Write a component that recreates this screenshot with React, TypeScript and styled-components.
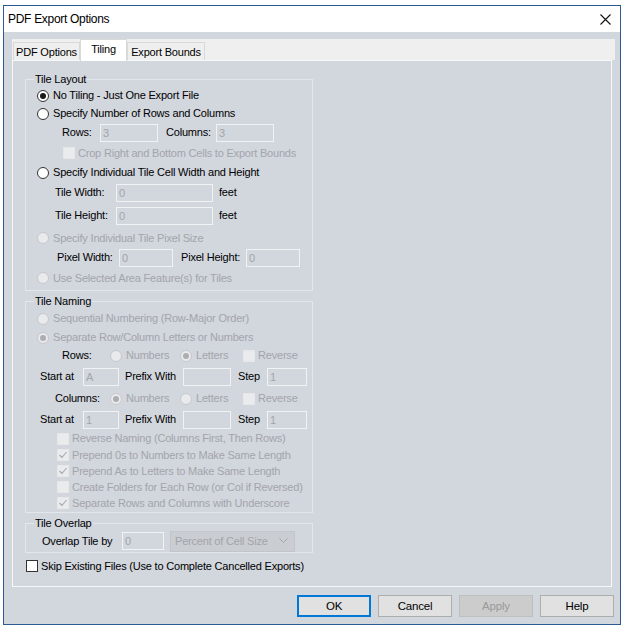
import React from "react";
import styled, { createGlobalStyle } from "styled-components";

const GlobalStyle = createGlobalStyle`
  html, body {
    margin: 0;
    padding: 0;
    background: #ffffff;
  }
  body {
    font-family: "Liberation Sans", Arial, sans-serif;
    font-size: 11px;
    letter-spacing: -0.2px;
    color: #000;
  }
`;

const Radio = ({ label, checked = false, disabled = false }: { label: string; checked?: boolean; disabled?: boolean }) => (
    <Item>
        <RadioCircle $checked={checked} $disabled={disabled} />
        <Text $disabled={disabled}>{label}</Text>
    </Item>
);

const Check = ({ label, checked = false, disabled = false }: { label: string; checked?: boolean; disabled?: boolean }) => (
    <Item $gap={3}>
        <CheckBox $disabled={disabled}>
            {checked && (
                <svg width="10" height="10" viewBox="0 0 10 10">
                    <polyline points="1.5,5 4,7.5 8.5,2" fill="none" stroke={disabled ? "#a3a6ab" : "#222"} strokeWidth="1.1" />
                </svg>
            )}
        </CheckBox>
        <Text $disabled={disabled}>{label}</Text>
    </Item>
);

const StartRow = ({ start, pl, h }: { start: string; pl: number; h: number }) => (
    <Row $h={h} $pl={pl}>
        <Label $w={43}>Start at</Label>
        <Field $w={36}>{start}</Field>
        <Label $w={58} $ml={6}>Prefix With</Label>
        <Field $w={48} />
        <Label $w={29} $ml={7}>Step</Label>
        <Field $w={40}>1</Field>
    </Row>
);

const App = () => {
    return (
        <Screen>
            <GlobalStyle />
            <Window>
                <TitleBar>
                    <Title>PDF Export Options</Title>
                    <svg width="11" height="11" viewBox="0 0 11 11">
                        <path d="M0.5 0.5 L10.5 10.5 M10.5 0.5 L0.5 10.5" stroke="#111" strokeWidth="1.1" />
                    </svg>
                </TitleBar>

                <Body>
                    <TabControl>
                        <TabStrip>
                            <Tab $w={67}>PDF Options</Tab>
                            <Tab $w={47} $active>Tiling</Tab>
                            <Tab $w={78}>Export Bounds</Tab>
                        </TabStrip>

                        <Page>
                            <Group>
                                <Legend>Tile Layout</Legend>
                                <Row $h={19} $pl={11}><Radio label="No Tiling - Just One Export File" checked /></Row>
                                <Row $h={17} $pl={11}><Radio label="Specify Number of Rows and Columns" /></Row>
                                <Row $h={21} $pl={36}>
                                    <Label $w={38}>Rows:</Label>
                                    <Field $w={58}>3</Field>
                                    <Label $w={50} $ml={8}>Columns:</Label>
                                    <Field $w={58}>3</Field>
                                </Row>
                                <Row $h={20} $pl={37}><Check label="Crop Right and Bottom Cells to Export Bounds" disabled /></Row>
                                <Row $h={19} $pl={11}><Radio label="Specify Individual Tile Cell Width and Height" /></Row>
                                <Row $h={21} $pl={29}>
                                    <Label $w={61}>Tile Width:</Label>
                                    <Field $w={97}>0</Field>
                                    <Label $ml={6}>feet</Label>
                                </Row>
                                <Row $h={25} $pl={29}>
                                    <Label $w={61}>Tile Height:</Label>
                                    <Field $w={97}>0</Field>
                                    <Label $ml={6}>feet</Label>
                                </Row>
                                <Row $h={20} $pl={11}><Radio label="Specify Individual Tile Pixel Size" disabled /></Row>
                                <Row $h={19} $pl={31}>
                                    <Label $w={62}>Pixel Width:</Label>
                                    <Field $w={54}>0</Field>
                                    <Label $w={65} $ml={8}>Pixel Height:</Label>
                                    <Field $w={54}>0</Field>
                                </Row>
                                <Row $h={22} $pl={11}><Radio label="Use Selected Area Feature(s) for Tiles" disabled /></Row>
                            </Group>

                            <Group $mt={4}>
                                <Legend>Tile Naming</Legend>
                                <Row $h={21} $pl={11}><Radio label="Sequential Numbering (Row-Major Order)" disabled /></Row>
                                <Row $h={17} $pl={11}><Radio label="Separate Row/Column Letters or Numbers" disabled checked /></Row>
                                <Row $h={19} $pl={36}>
                                    <Label $w={48}>Rows:</Label>
                                    <Slot $w={70}><Radio label="Numbers" disabled /></Slot>
                                    <Slot $w={63}><Radio label="Letters" disabled checked /></Slot>
                                    <Check label="Reverse" disabled />
                                </Row>
                                <StartRow start="A" pl={14} h={23} />
                                <Row $h={21} $pl={29}>
                                    <Label $w={55}>Columns:</Label>
                                    <Slot $w={70}><Radio label="Numbers" disabled checked /></Slot>
                                    <Slot $w={63}><Radio label="Letters" disabled /></Slot>
                                    <Check label="Reverse" disabled />
                                </Row>
                                <StartRow start="1" pl={14} h={21} />
                                <Row $h={17} $pl={31}><Check label="Reverse Naming (Columns First, Then Rows)" disabled /></Row>
                                <Row $h={16} $pl={31}><Check label="Prepend 0s to Numbers to Make Same Length" disabled checked /></Row>
                                <Row $h={16} $pl={31}><Check label="Prepend As to Letters to Make Same Length" disabled checked /></Row>
                                <Row $h={16} $pl={31}><Check label="Create Folders for Each Row (or Col if Reversed)" disabled /></Row>
                                <Row $h={16} $pl={31}><Check label="Separate Rows and Columns with Underscore" disabled checked /></Row>
                            </Group>

                            <Group $mt={4} $pb={0}>
                                <Legend>Tile Overlap</Legend>
                                <Row $h={22} $pl={16}>
                                    <Label $w={80}>Overlap Tile by</Label>
                                    <Field $w={42}>0</Field>
                                    <Select>
                                        <span>Percent of Cell Size</span>
                                        <svg width="9" height="6" viewBox="0 0 9 6">
                                            <polyline points="0.5,0.5 4.5,4.5 8.5,0.5" fill="none" stroke="#a3a6ab" strokeWidth="1" />
                                        </svg>
                                    </Select>
                                </Row>
                            </Group>

                            <Row $h={16} $pl={1} $mt={5}>
                                <Item $gap={3}>
                                    <CheckBox />
                                    <Text>Skip Existing Files (Use to Complete Cancelled Exports)</Text>
                                </Item>
                            </Row>
                        </Page>
                    </TabControl>

                    <Buttons>
                        <Button $default>OK</Button>
                        <Button>Cancel</Button>
                        <Button $disabled>Apply</Button>
                        <Button>Help</Button>
                    </Buttons>
                </Body>
            </Window>
        </Screen>
    );
};

/* CSS */
const Screen = styled.div`
  width: 626px;
  height: 631px;
  padding: 5px 0 0 3px;
  box-sizing: border-box;
`;

const Window = styled.div`
  width: 618px;
  height: 620px;
  box-sizing: border-box;
  border: 1px solid #2c5a94;
  background: #d2d6dd;
  display: flex;
  flex-direction: column;
`;

const TitleBar = styled.div`
  height: 26px;
  flex: none;
  background: #ffffff;
  display: flex;
  align-items: center;
  justify-content: space-between;
  padding: 0 9px 0 4px;
`;

const Title = styled.div`
  font-size: 12px;
  letter-spacing: -0.3px;
`;

const Body = styled.div`
  flex: 1;
  display: flex;
  flex-direction: column;
  padding: 7px 5px 7px 8px;
  gap: 8px;
`;

const TabControl = styled.div`
  flex: 1;
  display: flex;
  flex-direction: column;
`;

const TabStrip = styled.div`
  height: 21px;
  flex: none;
  background: #efefef;
  display: flex;
  align-items: flex-end;
  padding-left: 1px;
  position: relative;
  z-index: 1;
`;

const Tab = styled.div<{ $w: number; $active?: boolean }>`
  width: ${p => p.$w}px;
  height: ${p => (p.$active ? 22 : 18)}px;
  margin-bottom: ${p => (p.$active ? -1 : 0)}px;
  box-sizing: border-box;
  border: 1px solid #d9d9d9;
  border-bottom: none;
  background: ${p => (p.$active ? "#ffffff" : "#efefef")};
  display: flex;
  justify-content: center;
  align-items: ${p => (p.$active ? "flex-start" : "center")};
  padding-top: ${p => (p.$active ? 3 : 0)}px;
`;

const Page = styled.div`
  flex: 1;
  margin-right: 3px;
  background: #d2d6dd;
  border: 1px solid #f7f8f9;
  padding: 12px 0 0 12px;
`;

const Group = styled.fieldset<{ $mt?: number; $pb?: number }>`
  margin: ${p => p.$mt ?? 0}px 0 0 0;
  padding: 0 0 ${p => p.$pb ?? 1}px 0;
  width: 288px;
  box-sizing: border-box;
  border: 1px solid #e3e6ea;
  min-width: 0;
`;

const Legend = styled.legend`
  margin-left: 8px;
  padding: 0 1px;
  line-height: 13px;
`;

const Row = styled.div<{ $h: number; $pl: number; $mt?: number }>`
  display: flex;
  align-items: center;
  height: ${p => p.$h}px;
  padding-left: ${p => p.$pl}px;
  margin-top: ${p => p.$mt ?? 0}px;
  white-space: nowrap;
`;

const Item = styled.div<{ $gap?: number }>`
  display: flex;
  align-items: center;
  gap: ${p => p.$gap ?? 4}px;
`;

const Slot = styled.div<{ $w: number }>`
  width: ${p => p.$w}px;
`;

const Text = styled.span<{ $disabled?: boolean }>`
  color: ${p => (p.$disabled ? "#a2a5ab" : "#000")};
  line-height: 13px;
`;

const Label = styled.span<{ $w?: number; $ml?: number }>`
  width: ${p => (p.$w ? `${p.$w}px` : "auto")};
  margin-left: ${p => p.$ml ?? 0}px;
  flex: none;
  line-height: 13px;
`;

const RadioCircle = styled.span<{ $checked: boolean; $disabled: boolean }>`
  width: 12px;
  height: 12px;
  box-sizing: border-box;
  border-radius: 50%;
  border: 1px solid ${p => (p.$disabled ? "#c6c8cc" : "#333333")};
  background: ${p => (p.$disabled ? "#e9eaec" : "#ffffff")};
  display: flex;
  align-items: center;
  justify-content: center;
  flex: none;

  &::after {
    content: "";
    display: ${p => (p.$checked ? "block" : "none")};
    width: 6px;
    height: 6px;
    border-radius: 50%;
    background: ${p => (p.$disabled ? "#acaeb2" : "#1a1a1a")};
  }
`;

const CheckBox = styled.span<{ $disabled?: boolean }>`
  width: 12px;
  height: 12px;
  box-sizing: border-box;
  border: 1px solid ${p => (p.$disabled ? "#e6e7e9" : "#333333")};
  background: ${p => (p.$disabled ? "#eaebed" : "#ffffff")};
  display: flex;
  align-items: center;
  justify-content: center;
  flex: none;
`;

const Field = styled.div<{ $w: number }>`
  width: ${p => p.$w}px;
  height: 18px;
  box-sizing: border-box;
  flex: none;
  border: 1px solid #f1f2f4;
  padding: 0 2px;
  color: #a2a5ab;
  display: flex;
  align-items: center;
`;

const Select = styled.div`
  width: 125px;
  height: 21px;
  box-sizing: border-box;
  margin-left: 6px;
  flex: none;
  background: #cacdd2;
  border: 1px solid #c2c5ca;
  color: #a2a5ab;
  display: flex;
  align-items: center;
  justify-content: space-between;
  padding: 0 6px 0 4px;
`;

const Buttons = styled.div`
  display: flex;
  justify-content: flex-end;
  gap: 7px;
  padding-right: 1px;
`;

const Button = styled.div<{ $default?: boolean; $disabled?: boolean }>`
  width: 74px;
  height: 22px;
  box-sizing: border-box;
  display: flex;
  align-items: center;
  justify-content: center;
  background: ${p => (p.$disabled ? "#cccccc" : "#e1e1e1")};
  border: ${p => (p.$default ? "2px solid #0078d7" : p.$disabled ? "1px solid #bfbfbf" : "1px solid #adadad")};
  color: ${p => (p.$disabled ? "#9a9a9a" : "#000")};
  font-size: 11.5px;
`;

export default App;
